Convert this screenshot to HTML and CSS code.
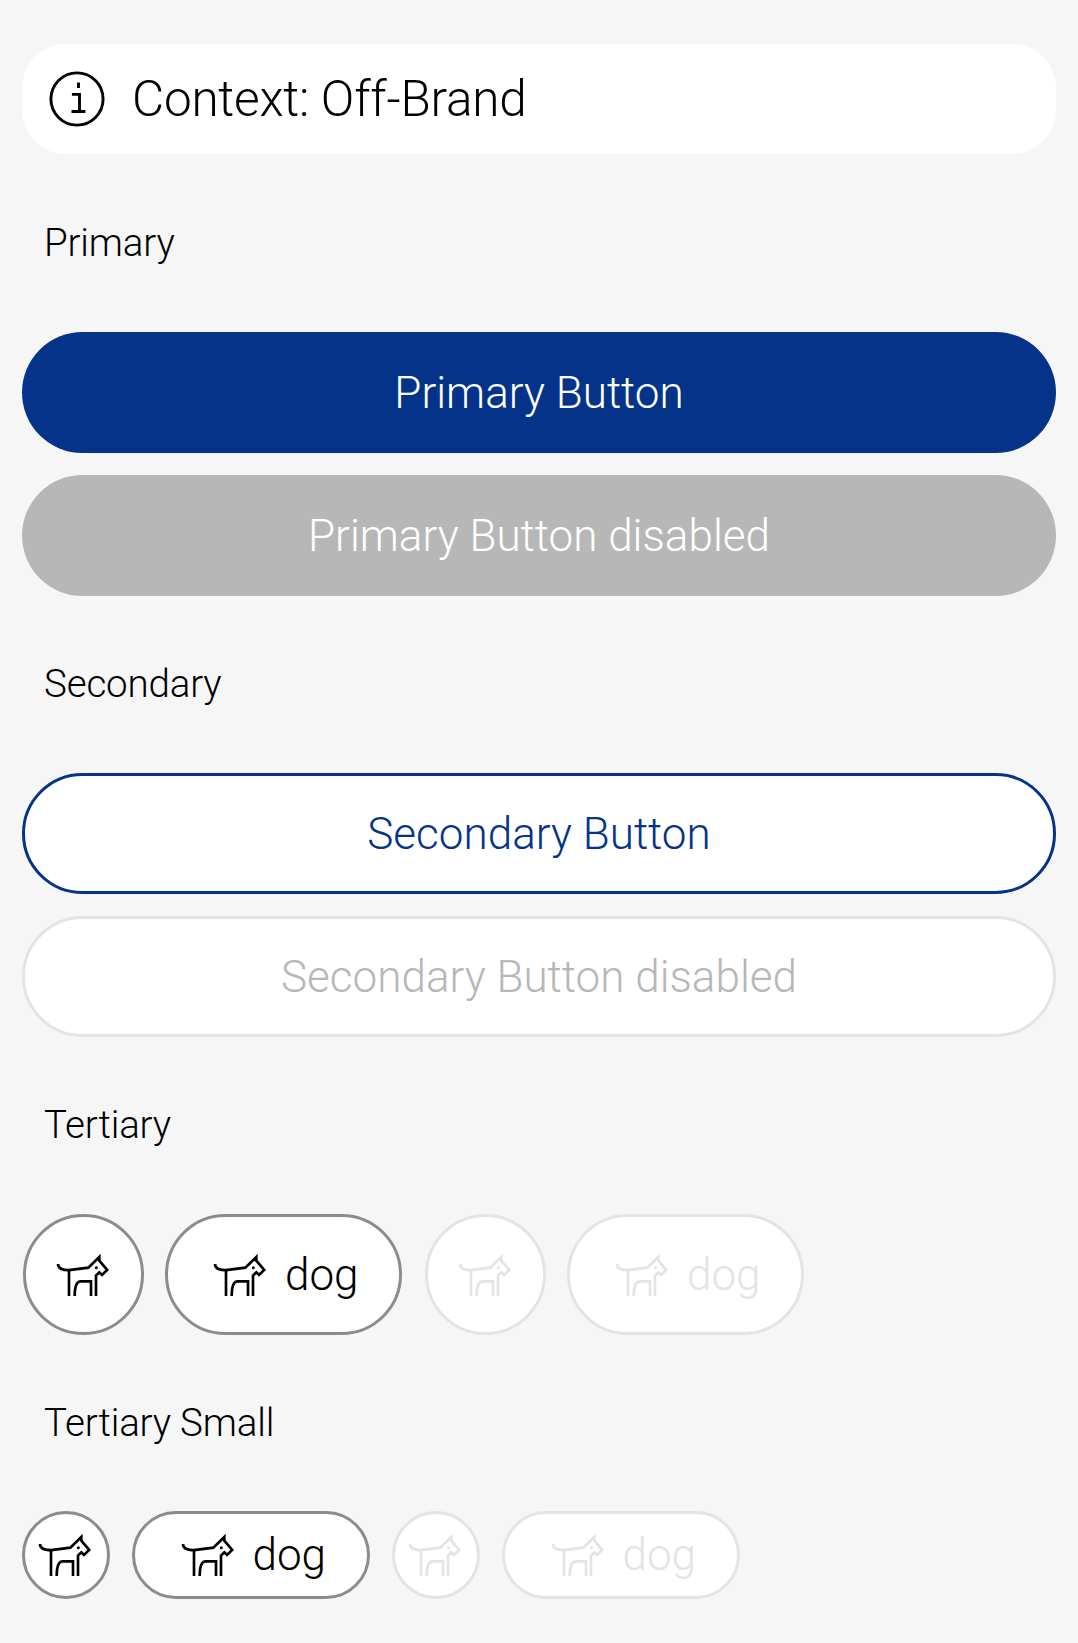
FILE: index.html
```html
<!DOCTYPE html>
<html lang="en">
<head>
<meta charset="utf-8">
<title>Buttons</title>
<link rel="stylesheet" href="styles.css">
</head>
<body>
<svg class="defs" aria-hidden="true">
  <symbol id="dog" viewBox="0 0 198 198">
    <g fill="none" stroke="currentColor" stroke-width="8">
      <path d="M21 66C21 79 34 84.500 54 84.500L112 77L145 45V56L168.500 84L153 99L145 91L135 101V162"/>
      <path d="M54 84V162M71 162C71 132 77 118 89 118H120V162"/>
    </g>
    <circle cx="136" cy="77" r="4.500" fill="currentColor"/>
  </symbol>
</svg>
<main class="page">
  <header class="context">
    <svg class="info" viewBox="0 0 66 66" fill="none" stroke="currentColor" stroke-width="2.900">
      <circle cx="33" cy="33" r="26.100"/>
      <path d="M34.500 16.500V22M27.900 28.400H35.500V45.500M27.500 45.500H41.400"/>
    </svg>
    <h1 class="context-title">Context: Off-Brand</h1>
  </header>

  <h2 class="heading heading-first">Primary</h2>
  <div class="stack">
    <button class="button primary"><span class="label">Primary Button</span></button>
    <button class="button primary" disabled><span class="label">Primary Button disabled</span></button>
  </div>

  <h2 class="heading">Secondary</h2>
  <div class="stack">
    <button class="button secondary"><span class="label">Secondary Button</span></button>
    <button class="button secondary" disabled><span class="label">Secondary Button disabled</span></button>
  </div>

  <h2 class="heading">Tertiary</h2>
  <div class="row">
    <button class="button tertiary round" aria-label="dog"><svg class="icon"><use href="#dog"/></svg></button>
    <button class="button tertiary"><svg class="icon"><use href="#dog"/></svg><span class="label">dog</span></button>
    <button class="button tertiary round" aria-label="dog" disabled><svg class="icon"><use href="#dog"/></svg></button>
    <button class="button tertiary" disabled><svg class="icon"><use href="#dog"/></svg><span class="label">dog</span></button>
  </div>

  <h2 class="heading heading-last">Tertiary Small</h2>
  <div class="row row-small">
    <button class="button tertiary small round" aria-label="dog"><svg class="icon"><use href="#dog"/></svg></button>
    <button class="button tertiary small"><svg class="icon"><use href="#dog"/></svg><span class="label">dog</span></button>
    <button class="button tertiary small round" aria-label="dog" disabled><svg class="icon"><use href="#dog"/></svg></button>
    <button class="button tertiary small" disabled><svg class="icon"><use href="#dog"/></svg><span class="label">dog</span></button>
  </div>
</main>
</body>
</html>
```
FILE: styles.css
```css
* {
  box-sizing: border-box;
}

body {
  margin: 0;
  background: #f6f6f6;
  color: #000;
  font-family: Roboto, "Liberation Sans", sans-serif;
  font-weight: 300;
}

.defs {
  display: none;
}

.page {
  min-height: 1643px;
  padding: 44px 22px;
}

.context {
  display: flex;
  align-items: center;
  gap: 22px;
  height: 110px;
  padding: 0 22px;
  border-radius: 44px;
  background: #fff;
}

.info,
.icon {
  flex: none;
  width: 66px;
  height: 66px;
}

.context-title {
  margin: 0;
  font-size: 49.5px;
  font-weight: 300;
  letter-spacing: -0.25px;
}

.heading {
  display: flex;
  align-items: center;
  height: 177px;
  margin: 0;
  padding: 0 0 2px 22px;
  font-size: 38.5px;
  font-weight: 300;
  letter-spacing: -0.17px;
}

.heading-first {
  height: 178px;
}

.heading-last {
  height: 176px;
}

.stack {
  display: flex;
  flex-direction: column;
  gap: 22px;
}

.row {
  display: flex;
  gap: 21px;
  padding-left: 1px;
}

.row-small {
  gap: 22px;
  padding-left: 0;
}

.button {
  display: flex;
  align-items: center;
  justify-content: center;
  height: 121px;
  padding: 0;
  border: 3px solid transparent;
  border-radius: 61px;
  font: 300 44px Roboto, "Liberation Sans", sans-serif;
  letter-spacing: 0.02px;
}

.label {
  padding-top: 1px;
}

.primary {
  border: 0;
  background: #05338a;
  color: #fff;
}

.primary:disabled {
  background: #b7b7b7;
  color: #fff;
}

.secondary {
  border-color: #05338a;
  background: #fff;
  color: #05338a;
}

.secondary:disabled {
  border-color: #e4e4e4;
  color: #b7b7b7;
}

.tertiary {
  gap: 10.5px;
  width: 237px;
  border-color: #8c8c8c;
  background: #fff;
  color: #000;
}

.tertiary:disabled {
  border-color: #e4e4e4;
  color: #e4e4e4;
}

.tertiary.round {
  width: 121px;
}

.tertiary.round:disabled {
  margin-left: 2px;
}

.small {
  width: 238px;
  height: 88px;
}

.small .label {
  padding-top: 0;
}

.tertiary.small.round {
  width: 88px;
  margin-left: 0;
}
```
